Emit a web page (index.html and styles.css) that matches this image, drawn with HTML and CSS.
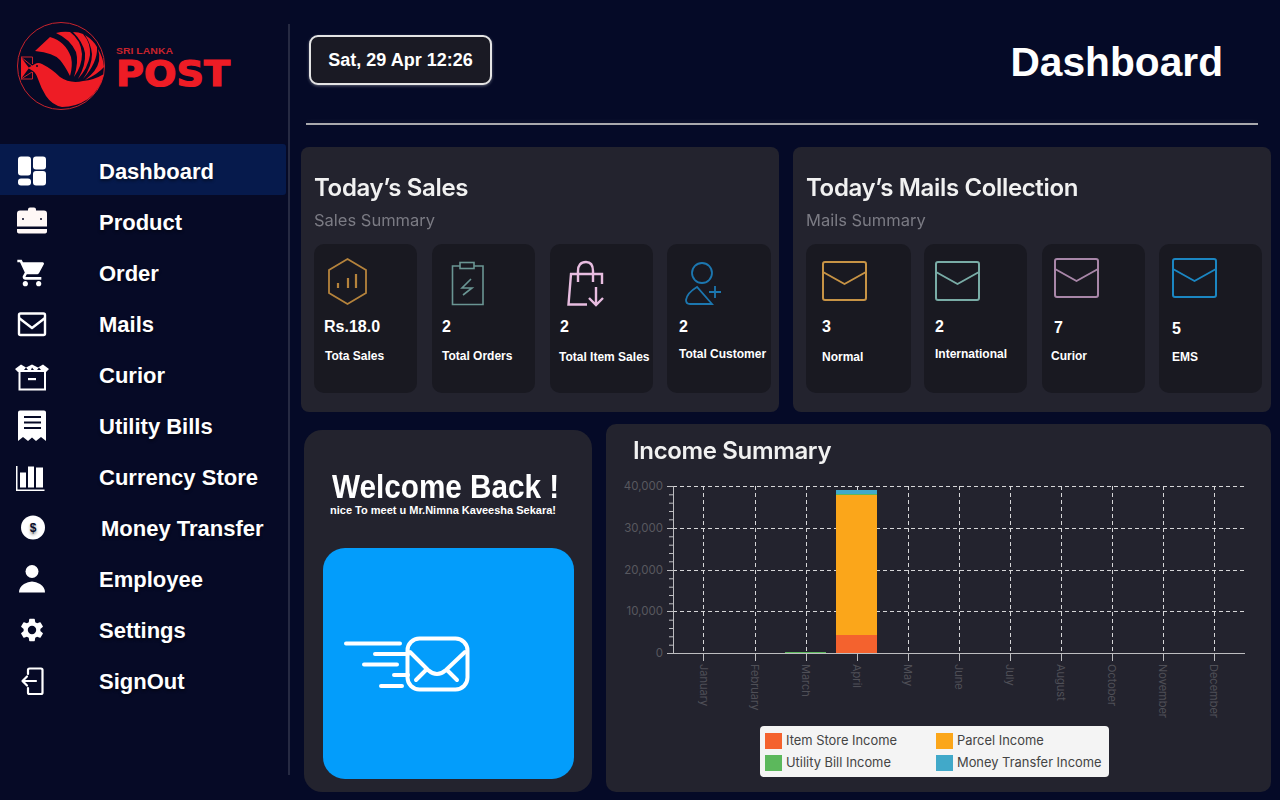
FILE: index.html
```html
<!DOCTYPE html>
<html lang="en">
<head>
  <meta charset="UTF-8">
  <title>Sri Lanka Post Dashboard</title>
  <meta name="viewport" content="width=device-width, initial-scale=1.0">
  <link rel="stylesheet" href="styles.css">
</head>
<body>
  <aside class="sidebar">
    <div class="logo">
      <svg width="240" height="144" viewBox="0 0 240 144">
        <circle cx="61" cy="66" r="43.5" fill="none" stroke="#c8232c" stroke-width="1"/>
        <path fill="#ee1c25" d="M28 68L35 64Q38 62 42 64Q52 69 60 77Q70 84 83 81Q94 80 104 74Q100 90 88 99Q76 107 62 107Q52 105 46 96Q41 88 38 79Q36 73 33 71Z"/>
        <path fill="#ee1c25" d="M35 51L50 37Q65 41 71 57Q73 66 70 76Q65 66 60 60Q54 53 35 51Z"/>
        <path fill="#ee1c25" d="M56 33Q63 31 70 32Q81 40 82 54Q82 66 74 77Q79 62 76 52Q70 39 56 33Z"/>
        <path fill="#ee1c25" d="M73 32Q79 32 83 34Q91 43 90 55Q88 68 78 79Q86 65 85 53Q83 42 73 32Z"/>
        <path fill="#ee1c25" d="M85 35Q93 40 97 47Q98 62 83 79Q92 66 92 54Q91 44 85 35Z"/>
        <path fill="#ee1c25" d="M98 49Q103 57 104 67Q98 74 85 80Q97 71 99 61Q100 55 98 49Z"/>
        <path fill="#ee1c25" d="M21 57L29 68L21 79Z"/>
        <path fill="none" stroke="#c8232c" stroke-width="1" d="M21 57H32.500V64M32.500 72V79H21M21 57L32 66M21 79L32 72"/>
        <circle cx="37" cy="66" r="1" fill="#060a26"/>
        <text class="logo-small" x="116" y="54" textLength="57" lengthAdjust="spacingAndGlyphs">SRI LANKA</text>
        <text class="logo-big" x="116" y="86" textLength="114" lengthAdjust="spacingAndGlyphs">POST</text>
      </svg>
    </div>
    <nav class="nav">
      <a class="nav-item active">
        <svg class="nav-icon" viewBox="0 0 32 32"><g fill="#fff"><rect x="2" y="1.500" width="13" height="19" rx="3"/><rect x="17" y="1.500" width="13" height="13" rx="3"/><rect x="2" y="23.500" width="13" height="7" rx="3"/><rect x="17" y="16" width="13" height="14.500" rx="3"/></g></svg>
        <span>Dashboard</span>
      </a>
      <a class="nav-item">
        <svg class="nav-icon" viewBox="0 0 32 32"><path fill="#fff8f6" d="M12 4.500V3.500Q12 1.500 14 1.500H18Q20 1.500 20 3.500V4.500H28Q31 4.500 31 7.500V20.500H1V7.500Q1 4.500 4 4.500ZM1 23H31V25.500Q31 27.500 28 27.500H4Q1 27.500 1 25.500Z"/><circle cx="7" cy="13" r="1" fill="#060a26"/><circle cx="25" cy="13" r="1" fill="#060a26"/></svg>
        <span>Product</span>
      </a>
      <a class="nav-item">
        <svg class="nav-icon" viewBox="0 0 24 24"><path fill="#fff" d="M7 18c-1.100 0-1.990.9-1.990 2S5.900 22 7 22s2-.9 2-2-.9-2-2-2zM1 2v2h2l3.600 7.590-1.350 2.450c-.16.28-.25.61-.25.96 0 1.100.9 2 2 2h12v-2H7.420c-.14 0-.25-.11-.25-.25l.03-.12.9-1.630h7.450c.75 0 1.410-.41 1.750-1.030l3.580-6.490A1 1 0 0 0 20 4H5.210l-.94-2H1zm16 16c-1.100 0-1.990.9-1.990 2s.89 2 1.990 2 2-.9 2-2-.9-2-2-2z"/></svg>
        <span>Order</span>
      </a>
      <a class="nav-item">
        <svg class="nav-icon" viewBox="0 0 32 32"><g fill="none" stroke="#fff" stroke-width="2.400" stroke-linejoin="round"><rect x="3" y="5.500" width="26" height="21.500" rx="1.500"/><path d="M3 10L16 20L29 10"/></g></svg>
        <span>Mails</span>
      </a>
      <a class="nav-item">
        <svg class="nav-icon icon-free" viewBox="0 0 32 32"><path fill="#fff" fill-rule="evenodd" d="M5 5.500L-1 10L2 13H30L33 10L27 5.500L22 8.500L16 5.500L10 8.500ZM8 11L10 8.500L12 11ZM15 11L16 8.500L18 11ZM21 11L23 8.500L25 11Z"/><path fill="none" stroke="#fff" stroke-width="2" d="M3.500 13V30.500H29V13"/><rect x="12" y="19" width="8" height="2.200" fill="#fff"/></svg>
        <span>Curior</span>
      </a>
      <a class="nav-item">
        <svg class="nav-icon" viewBox="0 0 32 32"><path fill="#fff" fill-rule="evenodd" d="M4 .500H28Q30 .500 30 2.500V31L25 27L20 31L16 27.500L12 31L7 27L2 31V2.500Q2 .500 4 .500ZM8 6V8H25V6ZM8 11.500V13.500H25V11.500ZM8 17V19H25V17Z"/></svg>
        <span>Utility Bills</span>
      </a>
      <a class="nav-item">
        <svg class="nav-icon" viewBox="0 0 32 32"><path fill="#fff" d="M0 5H1.500V28.500H28.500V30H0ZM4 11.500H10V26.500H4ZM12 5.500H18V26.500H12ZM20 6.500H27V26.500H20Z"/></svg>
        <span>Currency Store</span>
      </a>
      <a class="nav-item nudge">
        <svg class="nav-icon" viewBox="0 0 32 32"><circle cx="17" cy="15.500" r="12" fill="#fff"/><text class="coin" x="17" y="19.500">$</text></svg>
        <span>Money Transfer</span>
      </a>
      <a class="nav-item">
        <svg class="nav-icon" viewBox="0 0 32 32"><circle cx="16" cy="8.500" r="6.500" fill="#fff"/><path fill="#fff" d="M3 29.500Q3 24 8 21Q12 18.500 16 18.500T24 21Q29 24 29 29.500Z"/></svg>
        <span>Employee</span>
      </a>
      <a class="nav-item">
        <svg class="nav-icon" viewBox="-1.700 -1.700 27.400 27.400"><path fill="#fff" d="M19.140 12.940c.04-.3.06-.61.06-.94 0-.32-.02-.64-.07-.94l2.030-1.580a.49.49 0 0 0 .12-.61l-1.920-3.320a.49.49 0 0 0-.59-.22l-2.390.96c-.5-.38-1.030-.7-1.620-.94l-.36-2.540a.48.48 0 0 0-.48-.41h-3.840c-.24 0-.43.17-.47.41l-.36 2.540c-.59.24-1.130.57-1.620.94l-2.390-.96a.48.48 0 0 0-.59.22L2.740 8.870c-.12.21-.08.47.12.61l2.030 1.580c-.05.3-.09.63-.09.94s.02.64.07.94l-2.030 1.580a.49.49 0 0 0-.12.61l1.920 3.320c.12.22.37.29.59.22l2.390-.96c.5.38 1.030.7 1.620.94l.36 2.540c.05.24.24.41.48.41h3.840c.24 0 .44-.17.47-.41l.36-2.540c.59-.24 1.130-.56 1.620-.94l2.390.96c.22.08.47 0 .59-.22l1.920-3.320c.12-.22.07-.47-.12-.61l-2.010-1.580zM12 15.600A3.610 3.610 0 0 1 8.400 12 3.610 3.610 0 0 1 12 8.400a3.610 3.610 0 0 1 3.600 3.600 3.610 3.610 0 0 1-3.600 3.600z"/></svg>
        <span>Settings</span>
      </a>
      <a class="nav-item">
        <svg class="nav-icon" viewBox="0 0 32 32"><path fill="none" stroke="#fff" stroke-width="2.200" stroke-linecap="round" stroke-linejoin="round" d="M12 9V5Q12 3.500 13.500 3.500H25Q26.500 3.500 26.500 5V27.500Q26.500 29 25 29H13.500Q12 29 12 27.500V23M20 16H7M11 11.500L6.500 16L11 20.500"/></svg>
        <span>SignOut</span>
      </a>
    </nav>
  </aside>
  <div class="divider"></div>

  <main class="main">
    <header class="topbar">
      <div class="clock">Sat, 29 Apr 12:26</div>
      <h1>Dashboard</h1>
    </header>
    <div class="rule"></div>

    <div class="row-top">
      <section class="panel">
        <h2>Today’s Sales</h2>
        <p class="sub">Sales Summary</p>
        <div class="stats stats-sales">
          <div class="stat">
            <svg class="stat-icon" width="46" height="46" viewBox="0 0 46 46"><g fill="none" stroke="#b5833c" stroke-width="1.800"><path d="M23.500 1L42 12V35L23.500 46L5 35V12Z"/><path stroke-width="2.200" d="M14 30V25M24 30V20M32 30V16"/></g></svg>
            <div class="value">Rs.18.0</div>
            <div class="label label-left">Tota Sales</div>
          </div>
          <div class="stat">
            <svg class="stat-icon" width="46" height="46" viewBox="0 0 46 46"><g fill="none" stroke="#6a9593" stroke-width="1.600"><path d="M18 8H10.500V46.500H41V8H32"/><rect x="18" y="4.500" width="14" height="6"/><path d="M29 21L20 30H30L21 37"/></g></svg>
            <div class="value">2</div>
            <div class="label">Total Orders</div>
          </div>
          <div class="stat">
            <svg class="stat-icon" width="46" height="46" viewBox="0 0 46 46"><g fill="none" stroke="#e8bde0" stroke-width="2.400"><path d="M27 46.500H8.500L11 16H42V26"/><path d="M18 24V13Q18 4 26 4Q33 4 33 13V24"/><path d="M36 29V46M29 40L36 47L43 40"/></g></svg>
            <div class="value">2</div>
            <div class="label label-item">Total Item Sales</div>
          </div>
          <div class="stat stat-wide">
            <svg class="stat-icon" width="46" height="46" viewBox="0 0 46 46"><g fill="none" stroke="#1c77b0" stroke-width="1.800"><circle cx="23" cy="15" r="10"/><path d="M18 29Q8 35 7 42Q7 46 11 46H33Z"/><path d="M36 28V40M30 34H42"/></g></svg>
            <div class="value">2</div>
            <div class="label label-up">Total Customer</div>
          </div>
        </div>
      </section>

      <section class="panel">
        <h2>Today’s Mails Collection</h2>
        <p class="sub">Mails Summary</p>
        <div class="stats stats-mails">
          <div class="stat mail-a">
            <svg class="stat-icon" width="46" height="46" viewBox="0 0 46 46"><use href="#envelope" stroke="#c79345"/></svg>
            <div class="value">3</div>
            <div class="label label-item">Normal</div>
          </div>
          <div class="stat mail-b">
            <svg class="stat-icon" width="46" height="46" viewBox="0 0 46 46"><use href="#envelope" stroke="#79aca6"/></svg>
            <div class="value">2</div>
            <div class="label label-up">International</div>
          </div>
          <div class="stat mail-c">
            <svg class="stat-icon icon-high" width="46" height="46" viewBox="0 0 46 46"><use href="#envelope" stroke="#a886a8"/></svg>
            <div class="value value-low">7</div>
            <div class="label label-curior">Curior</div>
          </div>
          <div class="stat mail-d">
            <svg class="stat-icon icon-high" width="46" height="46" viewBox="0 0 46 46"><use href="#envelope" stroke="#1b86c2"/></svg>
            <div class="value value-lower">5</div>
            <div class="label label-item">EMS</div>
          </div>
        </div>
      </section>
    </div>

    <div class="row-bottom">
      <section class="welcome">
        <h2>Welcome Back !</h2>
        <p>nice To meet u Mr.Nimna Kaveesha Sekara!</p>
        <div class="hero">
          <svg width="130" height="60" viewBox="343 633 130 60">
            <g fill="none" stroke="#fff" stroke-width="4" stroke-linecap="round">
              <path d="M346 642.500H400M375 653H408M364 663.500H397M394 674H408M381 685H402"/>
              <rect x="407.500" y="637.500" width="60" height="51" rx="12"/>
              <path d="M410 651L428 669Q437 677 446 669L465 651M416 679L426 669M457 679L447 669"/>
            </g>
          </svg>
        </div>
      </section>

      <section class="income">
        <h2>Income Summary</h2>
        <svg class="chart" width="665" height="246" viewBox="606 474 665 246">
          <path class="grid" d="M673 486.500H1245M673 528.500H1245M673 570.500H1245M673 611.500H1245"/>
          <path class="grid" d="M703.500 486V653M755.500 486V653M806.500 486V653M908.500 486V653M959.500 486V653M1010.500 486V653M1061.500 486V653M1112.500 486V653M1163.500 486V653M1214.500 486V653"/>
          <path class="grid" d="M857.500 486V490"/>
          <rect x="785" y="652" width="41" height="1.500" fill="#5cb85c"/>
          <rect x="836" y="635" width="41" height="18.500" fill="#f4622e"/>
          <rect x="836" y="495" width="41" height="140" fill="#fba61a"/>
          <rect x="836" y="494" width="41" height="1" fill="#5cb85c"/>
          <rect x="836" y="490" width="41" height="4" fill="#41a9c9"/>
          <path class="axis" d="M673.500 486V653.500M667 486.500H673M669 494.800H673M669 503.200H673M669 511.500H673M669 519.800H673M667 528.500H673M669 536.800H673M669 545.200H673M669 553.500H673M669 561.800H673M667 570.500H673M669 578.800H673M669 587.200H673M669 595.500H673M669 603.800H673M667 611.500H673M669 620.200H673M669 628.500H673M669 636.800H673M669 645.200H673M667 653.500H1245"/>
          <path class="axis" d="M703.500 653V661M755.500 653V661M806.500 653V661M857.500 653V661M908.500 653V661M959.500 653V661M1010.500 653V661M1061.500 653V661M1112.500 653V661M1163.500 653V661M1214.500 653V661"/>
          <g class="y-labels">
            <text x="663" y="490">40,000</text>
            <text x="663" y="532">30,000</text>
            <text x="663" y="574">20,000</text>
            <text x="663" y="615">10,000</text>
            <text x="663" y="657">0</text>
          </g>
          <g class="x-labels">
            <text transform="translate(700 664) rotate(90)">January</text>
            <text transform="translate(751 664) rotate(90)">February</text>
            <text transform="translate(802 664) rotate(90)">March</text>
            <text transform="translate(853 664) rotate(90)">April</text>
            <text transform="translate(904 664) rotate(90)">May</text>
            <text transform="translate(955 664) rotate(90)">June</text>
            <text transform="translate(1006 664) rotate(90)">July</text>
            <text transform="translate(1057 664) rotate(90)">August</text>
            <text transform="translate(1108 664) rotate(90)">October</text>
            <text transform="translate(1159 664) rotate(90)">November</text>
            <text transform="translate(1210 664) rotate(90)">December</text>
          </g>
        </svg>
        <div class="legend">
          <div class="legend-item"><span class="swatch swatch-store"></span>Item Store Income</div>
          <div class="legend-item"><span class="swatch swatch-parcel"></span>Parcel Income</div>
          <div class="legend-item"><span class="swatch swatch-bill"></span>Utility Bill Income</div>
          <div class="legend-item"><span class="swatch swatch-money"></span>Money Transfer Income</div>
        </div>
      </section>
    </div>
  </main>

  <svg class="defs" width="0" height="0">
    <defs>
      <g id="envelope" fill="none" stroke-width="2" stroke-linejoin="round">
        <rect x="1" y="4" width="43" height="38" rx="2"/>
        <path d="M1 14L22.500 26L44 14"/>
      </g>
    </defs>
  </svg>
</body>
</html>
```

FILE: styles.css
```css
* {
  box-sizing: border-box;
}
html, body {
  height: 100%;
}
body {
  margin: 0;
  display: flex;
  width: 1280px;
  height: 800px;
  overflow: hidden;
  background-color: #060a26;
  color: #fff;
  font-family: "Liberation Sans", Arial, sans-serif;
}
h1, h2, p {
  margin: 0;
}
svg {
  overflow: visible;
}
.defs {
  position: absolute;
}

/* sidebar */
.sidebar {
  width: 288px;
  flex: none;
}
.logo {
  height: 144px;
}
.logo svg {
  display: block;
}
.logo-small {
  font: bold 9px "Liberation Sans", sans-serif;
  fill: #c8232c;
}
.logo-big {
  font: bold 35px "DejaVu Sans", sans-serif;
  fill: #ee1c25;
  stroke: #ee1c25;
  stroke-width: 1.200;
}
.nav-item {
  display: flex;
  align-items: center;
  gap: 51px;
  height: 51px;
  padding: 2px 0 0 16px;
  margin-right: 2px;
  border-radius: 0 3px 3px 0;
  font-size: 22px;
  font-weight: bold;
  text-shadow: 0 2px 3px rgba(0, 0, 0, 0.45);
}
.nav-item span {
  padding-top: 2px;
}
.nav-item.active {
  background-color: #061a4c;
}
.nav-item.nudge {
  gap: 53px;
}
.nav-icon {
  width: 32px;
  height: 32px;
  flex: none;
}
.coin {
  font: bold 12px "Liberation Sans", sans-serif;
  text-anchor: middle;
  fill: #060a26;
}
.divider {
  width: 2px;
  flex: none;
  margin: 24px 0 25px;
  background-color: #262a42;
}

/* main area */
.main {
  flex: 1;
  min-width: 0;
  background-color: #050a27;
}
.topbar {
  display: flex;
  align-items: flex-start;
  justify-content: space-between;
  height: 123px;
  padding: 35px 57px 0 19px;
}
.clock {
  width: 183px;
  height: 50px;
  line-height: 47px;
  text-align: center;
  font-size: 18px;
  font-weight: bold;
  background-color: #1a1a24;
  border: 2.500px solid #e4e4e4;
  border-radius: 9px;
  box-shadow: 0 1px 3px rgba(255, 255, 255, 0.35);
}
.topbar h1 {
  font-size: 40.700px;
  line-height: 54px;
  font-weight: bold;
}
.rule {
  width: 952px;
  height: 2px;
  margin-left: 16px;
  background-color: #a9a9ad;
  box-shadow: 0 -2px 4px rgba(255, 255, 255, 0.06);
}

.row-top {
  display: flex;
  gap: 14px;
  margin: 22px 0 0 11px;
}
.panel {
  width: 478px;
  height: 265px;
  padding: 26px 0 0 13px;
  background-color: #23232e;
  border-radius: 8px;
}
.panel h2, .income h2 {
  font-family: Inter, "Noto Sans", sans-serif;
  font-size: 24px;
  line-height: 30px;
  font-weight: 600;
  letter-spacing: -0.35px;
  color: #f1f1f1;
  filter: blur(0.5px);
}
.sub {
  margin-top: 4px;
  font-family: Inter, "Noto Sans", sans-serif;
  font-size: 16.500px;
  line-height: 26px;
  color: #7b7b84;
  filter: blur(0.4px);
}

/* stat cards */
.stats {
  display: grid;
  margin-top: 11px;
}
.stats-sales {
  grid-template-columns: 103px 103px 103px 104px;
  column-gap: 15px;
}
.stats-mails {
  grid-template-columns: 105px 103px 103px 103px;
  column-gap: 14px;
}
.stat {
  display: flex;
  flex-direction: column;
  height: 149px;
  padding: 14px 0 0 10px;
  background-color: #191921;
  border-radius: 10px;
}
.stat-wide {
  margin: 0 1px 0 -1px;
  padding-left: 12px;
}
.mail-a {
  padding-left: 16px;
}
.mail-b {
  margin: 0 1px 0 -1px;
  padding-left: 11px;
}
.mail-c {
  padding-left: 12px;
}
.mail-d {
  padding-left: 13px;
}
.stat-icon {
  display: block;
  flex: none;
}
.icon-high {
  margin-top: -3px;
  margin-bottom: 3px;
}
.value {
  margin-top: 13px;
  font-size: 16px;
  line-height: 20px;
  font-weight: bold;
}
.value-low {
  padding-top: 1px;
  margin-bottom: -1px;
  height: 21px;
}
.value-lower {
  padding-top: 2px;
  margin-bottom: -2px;
  height: 22px;
}
.label {
  margin-top: 11px;
  font-size: 12px;
  line-height: 16px;
  font-weight: bold;
}
.label-left {
  margin-left: 1px;
}
.label-item {
  margin-top: 12px;
}
.stats-sales .label-item {
  margin-left: -1px;
}
.label-up {
  margin-top: 9px;
}
.label-curior {
  margin-left: -3px;
}

/* welcome card */
.row-bottom {
  display: flex;
  align-items: flex-start;
  gap: 14px;
  margin: 12px 0 0 14px;
}
.welcome {
  width: 288px;
  height: 362px;
  margin-top: 6px;
  padding: 40px 19px 0;
  background-color: #23232e;
  border-radius: 18px;
}
.welcome h2 {
  margin-left: 9px;
  font-size: 33px;
  line-height: 34px;
  font-weight: bold;
  white-space: nowrap;
  transform: scaleX(0.9);
  transform-origin: left center;
  filter: blur(0.5px);
}
.welcome p {
  margin: -1px 0 0 7px;
  font-size: 11px;
  line-height: 14px;
  font-weight: bold;
  white-space: nowrap;
}
.hero {
  display: flex;
  align-items: center;
  width: 251px;
  height: 231px;
  margin-top: 31px;
  padding-left: 20px;
  background-color: #039dfb;
  border-radius: 22px;
}

/* income chart */
.income {
  width: 665px;
  height: 368px;
  padding-top: 12px;
  background-color: #23232e;
  border-radius: 10px;
}
.income h2 {
  padding-left: 27px;
}
.chart {
  display: block;
  margin-top: 8px;
}
.grid {
  fill: none;
  stroke: #d6d6d8;
  stroke-width: 1;
  stroke-dasharray: 4 3;
}
.axis {
  fill: none;
  stroke: #bdbdc0;
  stroke-width: 1;
}
.y-labels text {
  font: 11.500px Inter, "Noto Sans", sans-serif;
  fill: #58585f;
  text-anchor: end;
}
.x-labels text {
  font: 11px Inter, "Noto Sans", sans-serif;
  fill: #4f4f57;
}
.legend {
  display: grid;
  grid-template-columns: 171px auto;
  row-gap: 6px;
  align-content: center;
  width: 349px;
  height: 51px;
  margin: 6px 0 0 154px;
  padding-left: 5px;
  background-color: #f4f4f4;
  border-radius: 4px;
  font-family: Inter, "Noto Sans", sans-serif;
  font-size: 12.900px;
  color: #444;
}
.legend-item {
  display: flex;
  align-items: center;
  gap: 4px;
  white-space: nowrap;
}
.swatch {
  width: 17px;
  height: 16px;
  flex: none;
}
.swatch-store {
  background-color: #f4622e;
}
.swatch-parcel {
  background-color: #fba61a;
}
.swatch-bill {
  background-color: #5cb85c;
}
.swatch-money {
  background-color: #41a9c9;
}
```
